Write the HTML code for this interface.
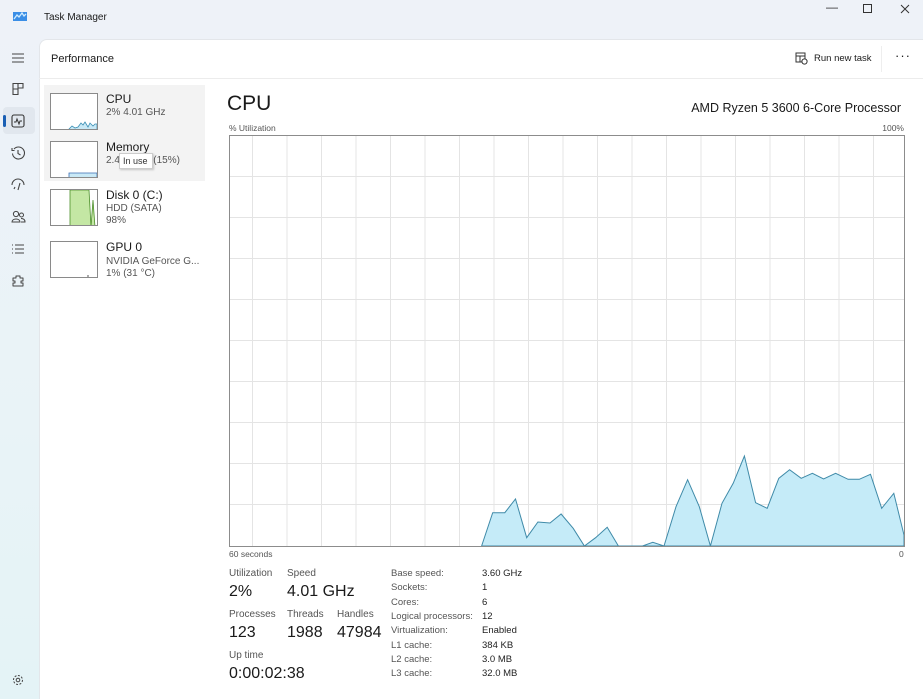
<!DOCTYPE html>
<html><head><meta charset="utf-8"><style>
*{margin:0;padding:0;box-sizing:border-box}
body{width:923px;height:699px;overflow:hidden;font-family:"Liberation Sans",sans-serif;background:linear-gradient(180deg,#eef2f8 0%,#e9f3f7 60%,#e4f3f6 100%);position:relative;color:#1a1a1a}
.abs{position:absolute}
.main{left:39px;top:39px;width:884px;height:660px;background:#fff;border-top-left-radius:8px;border-left:1px solid #e3e6ea;border-top:1px solid #e3e6ea}
.hdr{left:39px;top:78px;width:884px;height:1px;background:#ececec}
.t{position:absolute;white-space:nowrap}
.thumb{position:absolute;left:50px;width:48px;height:37px;border:1px solid #8a8a8a;background:#fff;overflow:hidden}
.lbl{font-size:10px;color:#555}
.val{font-size:16px;color:#1a1a1a}
.k{font-size:9.5px;color:#555}
.v{font-size:9.5px;color:#222}
</style></head><body>
<!-- title bar -->
<svg class="abs" style="left:13px;top:11px" width="14" height="11"><rect x="0" y="1" width="14" height="9" fill="#3a8ee6"/><path d="M1 8 L4 4 L6 6 L9 2 L11 5 L13 3" stroke="#d0ecff" stroke-width="1.3" fill="none"/></svg>
<div class="t" style="left:44px;top:12px;font-size:10px">Task Manager</div>
<div class="t" style="left:826px;top:0px;font-size:12px;color:#333">—</div>
<svg class="abs" style="left:863px;top:4px" width="10" height="10"><rect x=".5" y=".5" width="8" height="8" fill="none" stroke="#333"/></svg>
<svg class="abs" style="left:900px;top:4px" width="10" height="10"><path d="M1 1L9 9M9 1L1 9" stroke="#333"/></svg>
<!-- left nav icons -->
<svg class="abs" style="left:11px;top:52px" width="14" height="12"><path d="M1 2H13M1 6H13M1 10H13" stroke="#444" stroke-width="1.1"/></svg>
<svg class="abs" style="left:11px;top:82px" width="14" height="14"><path d="M2 1.5H12V6H7V12.5H2Z M7 6V1.5 M2 7H7" stroke="#444" fill="none" stroke-width="1.1"/></svg>
<div class="abs" style="left:3px;top:107px;width:32px;height:27px;background:#e1e7ee;border-radius:4px"></div>
<div class="abs" style="left:3px;top:115px;width:3px;height:12px;background:#1a5fb4;border-radius:2px"></div>
<svg class="abs" style="left:11px;top:114px" width="14" height="14"><rect x="1" y="1" width="12" height="12" rx="2" fill="none" stroke="#333" stroke-width="1.1"/><path d="M3 8H5L6 5L8 10L9 7H11" stroke="#333" fill="none"/></svg>
<svg class="abs" style="left:11px;top:146px" width="14" height="14"><path d="M3 3A6 6 0 1 1 1.5 7.5 M1 2V4.5H3.5 M7 4V7.5L9.5 9" stroke="#444" fill="none" stroke-width="1.1"/></svg>
<svg class="abs" style="left:11px;top:178px" width="14" height="14"><path d="M1 7A6 6 0 0 1 13 7 M7 12L9 5 M4 9L3 11" stroke="#444" fill="none" stroke-width="1.1"/></svg>
<svg class="abs" style="left:11px;top:210px" width="15" height="14"><circle cx="5" cy="4" r="2.6" fill="none" stroke="#444"/><circle cx="10.5" cy="5" r="2" fill="none" stroke="#444"/><path d="M1 12C1 8 9 8 9 12Z M10 8.5C13 8.5 14 10 14 12H10" fill="none" stroke="#444"/></svg>
<svg class="abs" style="left:11px;top:243px" width="14" height="12"><path d="M1 2H2M4 2H13M1 6H2M4 6H13M1 10H2M4 10H13" stroke="#444" stroke-width="1.1"/></svg>
<svg class="abs" style="left:11px;top:274px" width="14" height="15"><path d="M5 2H9V4H12V7H10V9H12V12H2V9H4V7H2V4H5Z" fill="none" stroke="#444" stroke-linejoin="round"/></svg>
<svg class="abs" style="left:12px;top:674px" width="12" height="12"><circle cx="6" cy="6" r="1.8" fill="none" stroke="#444"/><circle cx="6" cy="6" r="4.5" fill="none" stroke="#444" stroke-dasharray="2 1.5"/></svg>
<!-- main panel -->
<div class="abs main"></div>
<div class="abs hdr"></div>
<div class="t" style="left:51px;top:53px;font-size:11px">Performance</div>
<svg class="abs" style="left:795px;top:52px" width="13" height="13"><rect x="1" y="1" width="9" height="9" fill="none" stroke="#333"/><path d="M1 4H10M5 4V10" stroke="#333"/><circle cx="9.5" cy="9.5" r="2.6" fill="#fff" stroke="#333"/></svg>
<div class="t" style="left:814px;top:53px;font-size:9.5px">Run new task</div>
<div class="abs" style="left:881px;top:46px;width:1px;height:26px;background:#eee"></div>
<div class="t" style="left:895px;top:48px;font-size:13px;letter-spacing:1px">···</div>
<!-- left list -->
<div class="abs" style="left:44px;top:85px;width:161px;height:96px;background:#f3f3f3"></div>
<div class="thumb" style="top:93px"><svg width="48" height="37"><path d="M18 35L21 32L24 34L27 33L30 29L32 31L34 28L37 33L39 29L42 32L44 30L46 30V37H18Z" fill="#c9e9f6" stroke="#3b8fb4" stroke-width=".8"/></svg></div>
<div class="t" style="left:106px;top:92px;font-size:12px">CPU</div>
<div class="t lbl" style="left:106px;top:107px">2% 4.01 GHz</div>
<div class="thumb" style="top:141px"><svg width="48" height="37"><path d="M18 37V31H46V37Z" fill="#c9e9f6" stroke="#3b6fb4" stroke-width=".8"/></svg></div>
<div class="t" style="left:106px;top:140px;font-size:12px">Memory</div>
<div class="t lbl" style="left:106px;top:155px">2.4 &nbsp;&nbsp;&nbsp;&nbsp;&nbsp;&nbsp;&nbsp;&nbsp;&nbsp;&nbsp;&nbsp;(15%)</div>
<div class="abs" style="left:119px;top:153px;width:34px;height:16px;background:#fff;border:1px solid #ccc;box-shadow:1px 1px 2px rgba(0,0,0,.2)"></div>
<div class="t" style="left:123px;top:156px;font-size:9px;color:#333">In use</div>
<div class="thumb" style="top:189px"><svg width="48" height="37"><path d="M19 0H38L40 37H19Z" fill="#c4e7a4" stroke="#4c8f2a" stroke-width=".8"/><path d="M40 37L42 10L44 37" fill="#c4e7a4" stroke="#4c8f2a" stroke-width=".8"/></svg></div>
<div class="t" style="left:106px;top:188px;font-size:12px">Disk 0 (C:)</div>
<div class="t lbl" style="left:106px;top:203px">HDD (SATA)</div>
<div class="t lbl" style="left:106px;top:215px">98%</div>
<div class="thumb" style="top:241px"><svg width="48" height="37"><path d="M37 36V33" stroke="#555"/></svg></div>
<div class="t" style="left:106px;top:240px;font-size:12px">GPU 0</div>
<div class="t lbl" style="left:106px;top:256px">NVIDIA GeForce G...</div>
<div class="t lbl" style="left:106px;top:268px">1% (31 °C)</div>
<!-- CPU detail -->
<div class="t" style="left:227px;top:92px;font-size:21px">CPU</div>
<div class="t" style="right:22px;top:101px;font-size:12.5px">AMD Ryzen 5 3600 6-Core Processor</div>
<div class="t" style="left:229px;top:123px;font-size:8.5px;color:#555">% Utilization</div>
<div class="t" style="right:19px;top:123px;font-size:8.5px;color:#555">100%</div>
<svg class="abs" style="left:229px;top:135px" width="676" height="412">
<g stroke="#e4e4e4" stroke-width="1">
<path d="M0 41.5H676M0 82.5H676M0 123.5H676M0 164.5H676M0 205.5H676M0 246.5H676M0 287.5H676M0 328.5H676M0 369.5H676"/>
<path d="M23.5 0V411M58 0V411M92.5 0V411M127 0V411M161.5 0V411M196 0V411M230.5 0V411M265 0V411M299.5 0V411M334 0V411M368.5 0V411M403 0V411M437.5 0V411M472 0V411M506.5 0V411M541 0V411M575.5 0V411M610 0V411M644.5 0V411"/>
</g>
<path transform="translate(-229,-135)" d="M481.6 546L492.7 512.7L504.8 512.7L515.5 499L526.7 537.7L537.9 522L550 523L561.1 514L573.2 528.3L584.4 546L595.6 537.7L607.2 527.3L618.4 546L642.5 546L652.8 542.3L664 546L676 506.7L687.6 479.7L699.3 506.7L710.4 546L722 503.3L733.2 483.3L744.4 456L755.6 502.7L767.2 508.3L778.8 478.3L789.6 469.7L801.2 478.3L812.4 473.3L823.6 479L835.6 473.3L848.1 479.3L859.3 479.3L870.5 474.3L881.7 508.3L893.8 493.3L904 535V546Z" fill="#c5ebf8" stroke="#3f8aa8" stroke-width="1"/>
<rect x=".5" y=".5" width="675" height="411" fill="none" stroke="#8c8c8c"/>
</svg>
<div class="t" style="left:229px;top:549px;font-size:8.5px;color:#555">60 seconds</div>
<div class="t" style="left:899px;top:549px;font-size:8.5px;color:#555">0</div>
<div class="t lbl" style="left:229px;top:568px">Utilization</div>
<div class="t lbl" style="left:287px;top:568px">Speed</div>
<div class="t val" style="left:229px;top:583px">2%</div>
<div class="t val" style="left:287px;top:583px">4.01 GHz</div>
<div class="t lbl" style="left:229px;top:609px">Processes</div>
<div class="t lbl" style="left:287px;top:609px">Threads</div>
<div class="t lbl" style="left:337px;top:609px">Handles</div>
<div class="t val" style="left:229px;top:624px">123</div>
<div class="t val" style="left:287px;top:624px">1988</div>
<div class="t val" style="left:337px;top:624px">47984</div>
<div class="t lbl" style="left:229px;top:650px">Up time</div>
<div class="t val" style="left:229px;top:665px">0:00:02:38</div>
<div class="t k" style="left:391px;top:568px">Base speed:</div><div class="t v" style="left:482px;top:568px">3.60 GHz</div>
<div class="t k" style="left:391px;top:582px">Sockets:</div><div class="t v" style="left:482px;top:582px">1</div>
<div class="t k" style="left:391px;top:597px">Cores:</div><div class="t v" style="left:482px;top:597px">6</div>
<div class="t k" style="left:391px;top:611px">Logical processors:</div><div class="t v" style="left:482px;top:611px">12</div>
<div class="t k" style="left:391px;top:625px">Virtualization:</div><div class="t v" style="left:482px;top:625px">Enabled</div>
<div class="t k" style="left:391px;top:640px">L1 cache:</div><div class="t v" style="left:482px;top:640px">384 KB</div>
<div class="t k" style="left:391px;top:654px">L2 cache:</div><div class="t v" style="left:482px;top:654px">3.0 MB</div>
<div class="t k" style="left:391px;top:668px">L3 cache:</div><div class="t v" style="left:482px;top:668px">32.0 MB</div>
</body></html>
